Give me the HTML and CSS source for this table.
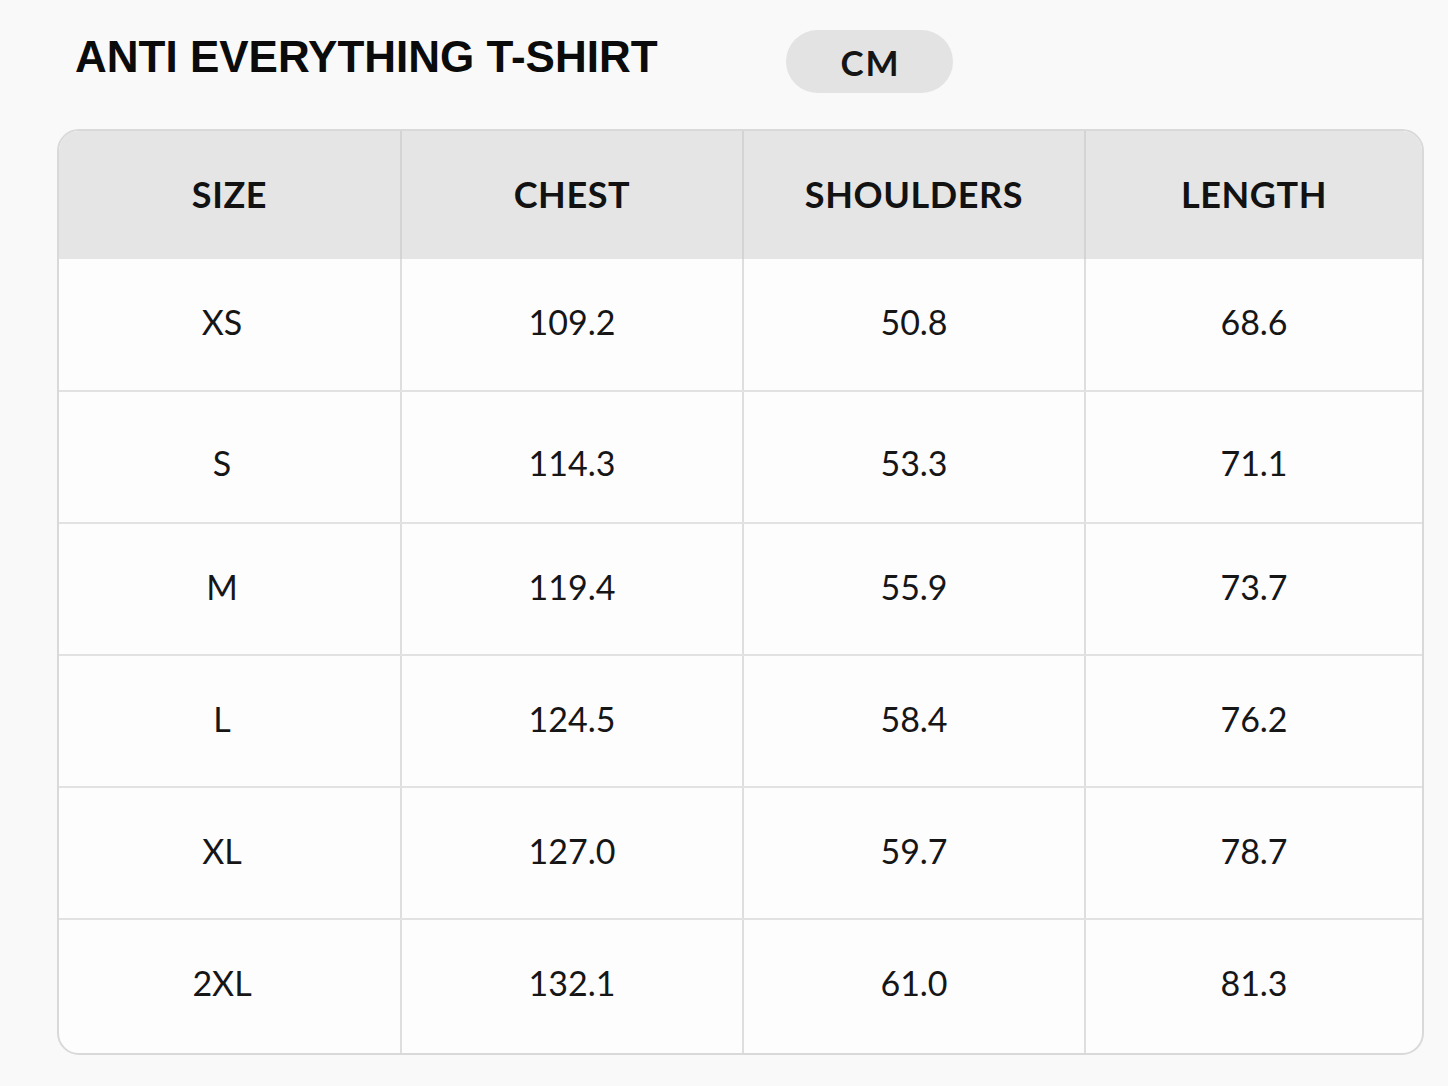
FILE: index.html
```html
<!DOCTYPE html>
<html lang="en">
<head>
<meta charset="utf-8">
<title>Anti Everything T-Shirt — Size Chart</title>
<link rel="stylesheet" href="styles.css">
</head>
<body>
<div class="page">
  <header class="top">
    <h1 class="title">ANTI EVERYTHING T-SHIRT</h1>
    <div class="unit">CM</div>
  </header>
  <div class="chart">
    <div class="row head">
      <div class="cell">SIZE</div>
      <div class="cell">CHEST</div>
      <div class="cell">SHOULDERS</div>
      <div class="cell">LENGTH</div>
    </div>
    <div class="row body first">
      <div class="cell size">XS</div>
      <div class="cell">109.2</div>
      <div class="cell">50.8</div>
      <div class="cell">68.6</div>
    </div>
    <div class="row body low">
      <div class="cell size">S</div>
      <div class="cell">114.3</div>
      <div class="cell">53.3</div>
      <div class="cell">71.1</div>
    </div>
    <div class="row body">
      <div class="cell size">M</div>
      <div class="cell">119.4</div>
      <div class="cell">55.9</div>
      <div class="cell">73.7</div>
    </div>
    <div class="row body">
      <div class="cell size">L</div>
      <div class="cell">124.5</div>
      <div class="cell">58.4</div>
      <div class="cell">76.2</div>
    </div>
    <div class="row body">
      <div class="cell size">XL</div>
      <div class="cell">127.0</div>
      <div class="cell">59.7</div>
      <div class="cell">78.7</div>
    </div>
    <div class="row body last">
      <div class="cell size">2XL</div>
      <div class="cell">132.1</div>
      <div class="cell">61.0</div>
      <div class="cell">81.3</div>
    </div>
  </div>
</div>
</body>
</html>
```

FILE: styles.css
```css
* {
  box-sizing: border-box;
}

html, body {
  margin: 0;
  padding: 0;
  background: #f9f9f9;
}

body {
  font-family: Lato, "Noto Sans", sans-serif;
  color: #141414;
}

.page {
  padding: 30px 24px 0 57px;
  width: 1448px;
}

.top {
  display: grid;
  grid-template-columns: 729px 167px;
  align-items: start;
}

.title {
  margin: 5px 0 0 18px;
  font-family: "Liberation Sans", Arial, sans-serif;
  font-weight: 700;
  font-size: 44px;
  line-height: 44px;
  color: #0b0b0b;
  white-space: nowrap;
}

.unit {
  height: 63px;
  border-radius: 32px;
  background: #e3e3e3;
  display: flex;
  align-items: center;
  justify-content: center;
  font-weight: 700;
  font-size: 35px;
  letter-spacing: 2px;
  padding-left: 2px;
  color: #151515;
}

.chart {
  margin-top: 36px;
  width: 1367px;
  border: 2px solid #d9d9d9;
  border-radius: 22px;
  overflow: hidden;
  background: #fdfdfd;
}

.row {
  display: grid;
  grid-template-columns: 341px 342px 342px 1fr;
}

.cell {
  display: flex;
  align-items: center;
  justify-content: center;
}

.cell + .cell {
  border-left: 2px solid #dedede;
}

.head {
  height: 128px;
  background: #e5e5e5;
}

.head .cell {
  font-weight: 700;
  font-size: 36px;
  letter-spacing: 0.6px;
  color: #121212;
  padding-bottom: 3px;
}

.head .cell + .cell {
  border-left-color: #d4d4d4;
}

.body {
  height: 132px;
  border-top: 2px solid #e2e2e2;
  font-size: 34px;
  font-weight: 400;
  color: #161616;
}

.body .cell {
  padding-bottom: 6px;
}

.body.first {
  height: 131px;
  border-top: none;
}

.body.low .cell {
  padding-top: 10px;
  padding-bottom: 0;
}

.body.last {
  height: 135px;
}

.body.last .cell {
  padding-bottom: 8px;
}

.body .size {
  padding-right: 15px;
}
```
